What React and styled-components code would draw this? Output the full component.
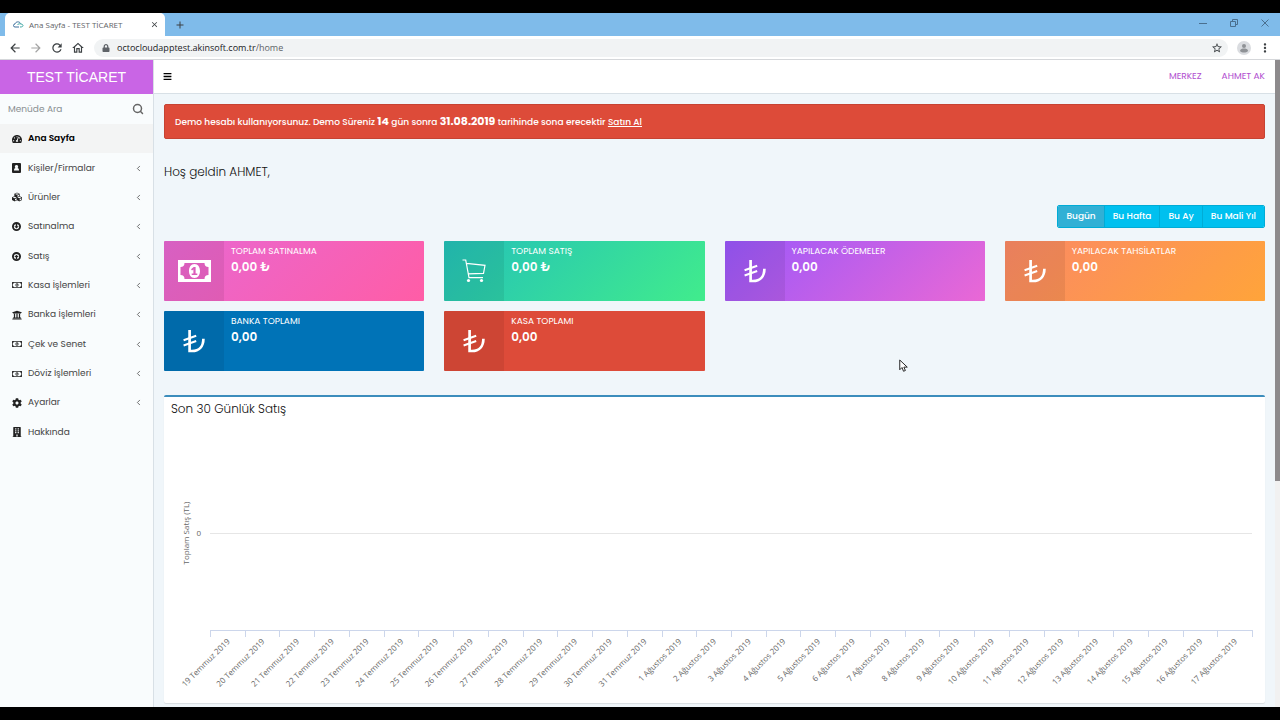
import React from "react";
import styled, { createGlobalStyle } from "styled-components";
import {
  FaTachometerAlt,
  FaCubes,
  FaRegMoneyBillAlt,
  FaUniversity,
  FaCog,
  FaBuilding,
  FaLock,
  FaBars,
} from "react-icons/fa";
import {
  MdArrowBack,
  MdArrowForward,
  MdRefresh,
  MdOutlineHome,
  MdStarBorder,
  MdMoreVert,
  MdAdd,
  MdClose,
} from "react-icons/md";
import { ChevronLeft, Search } from "lucide-react";

const ArrowRing = ({ up }) => (
  <svg viewBox="0 0 24 24" width="9" height="9">
    <circle cx="12" cy="12" r="9.5" fill="none" stroke="currentColor" strokeWidth="5" />
    <path
      d="M10 5h4v6h4l-6 6-6-6h4z"
      fill="currentColor"
      transform={up ? "rotate(180 12 12)" : undefined}
    />
  </svg>
);

const ContactBook = () => (
  <svg viewBox="0 0 18 20" width="9" height="10">
    <path
      d="M2 0h14a2 2 0 0 1 2 2v16a2 2 0 0 1-2 2H2a2 2 0 0 1-2-2V2a2 2 0 0 1 2-2zm7 4a3.300 3.300 0 0 0-2 6c-2 .6-3 2-3 5h10c0-3-1-4.400-3-5a3.300 3.300 0 0 0-2-6z"
      fill="currentColor"
      fillRule="evenodd"
    />
  </svg>
);

const Avatar = () => (
  <svg viewBox="0 0 28 28" width="14" height="14">
    <circle cx="14" cy="14" r="14" fill="#dadce0" />
    <circle cx="14" cy="10" r="4" fill="#8f9296" />
    <path d="M6 20c0-4 5-5 8-5s8 1 8 5c-4 4-12 4-16 0z" fill="#8f9296" />
  </svg>
);

const Lira = () => (
  <svg viewBox="0 0 22 23" width="22" height="23" fill="none" stroke="currentColor">
    <path d="M6.6 0V21H9c7 0 11.400-4.600 11.400-12.300" strokeWidth="2.700" />
    <path d="M.6 10.300 13.200 5.800M.6 15.500 13.200 11" strokeWidth="2" />
  </svg>
);

const Banknote = () => (
  <svg viewBox="0 0 33 22" width="33" height="22">
    <path
      d="M0 0h33v22H0zM6.500 3a4 4 0 0 1-4 4v8a4 4 0 0 1 4 4h20a4 4 0 0 1 4-4V7a4 4 0 0 1-4-4z"
      fill="currentColor"
      fillRule="evenodd"
    />
    <path
      d="M16.500 4c3.600 0 5.500 3.300 5.500 7s-1.900 7-5.500 7-5.500-3.300-5.500-7 1.900-7 5.500-7zm-.8 3-2.700 2.200 1 1.200 1.400-1v4.200h-1.700v1.500h5.600v-1.500h-1.700V7z"
      fill="currentColor"
      fillRule="evenodd"
    />
  </svg>
);

const Cart = () => (
  <svg viewBox="0 0 24 24" width="24" height="24" fill="none" stroke="currentColor" strokeWidth="1.200">
    <path d="M.5 1h3.200L7 18.600h14M4.400 4.300l18.600 2-1.500 8L6 14.800" />
    <circle cx="6.500" cy="21.500" r="1.600" fill="currentColor" stroke="none" />
    <circle cx="19.500" cy="21.500" r="1.600" fill="currentColor" stroke="none" />
  </svg>
);

const menu = [
  { label: "Ana Sayfa", icon: <FaTachometerAlt />, active: true },
  { label: "Kişiler/Firmalar", icon: <ContactBook />, more: true },
  { label: "Ürünler", icon: <FaCubes />, more: true },
  { label: "Satınalma", icon: <ArrowRing />, more: true },
  { label: "Satış", icon: <ArrowRing up />, more: true },
  { label: "Kasa İşlemleri", icon: <FaRegMoneyBillAlt />, more: true },
  { label: "Banka İşlemleri", icon: <FaUniversity />, more: true },
  { label: "Çek ve Senet", icon: <FaRegMoneyBillAlt />, more: true },
  { label: "Döviz İşlemleri", icon: <FaRegMoneyBillAlt />, more: true },
  { label: "Ayarlar", icon: <FaCog />, more: true },
  { label: "Hakkında", icon: <FaBuilding /> },
];

const stats = [
  { label: "TOPLAM SATINALMA", value: "0,00 ₺", icon: <Banknote />, from: "#e868d2", to: "#ff5da6" },
  { label: "TOPLAM SATIŞ", value: "0,00 ₺", icon: <Cart />, from: "#24c1b8", to: "#41ec8c" },
  { label: "YAPILACAK ÖDEMELER", value: "0,00", icon: <Lira />, from: "#9a58fb", to: "#ea68d5" },
  { label: "YAPILACAK TAHSİLATLAR", value: "0,00", icon: <Lira />, from: "#fb8965", to: "#ffa43a" },
  { label: "BANKA TOPLAMI", value: "0,00", icon: <Lira />, from: "#0073b7", to: "#0073b7" },
  { label: "KASA TOPLAMI", value: "0,00", icon: <Lira />, from: "#dd4b39", to: "#dd4b39" },
];

const ranges = ["Bugün", "Bu Hafta", "Bu Ay", "Bu Mali Yıl"];

const days = [
  ...Array.from({ length: 13 }, (_, i) => `${19 + i} Temmuz 2019`),
  ...Array.from({ length: 17 }, (_, i) => `${1 + i} Ağustos 2019`),
];

function SalesChart() {
  const left = 46;
  const right = 1088;
  const step = (right - left) / days.length;
  return (
    <ChartSvg viewBox="0 0 1101 282" role="img" aria-label="Son 30 Günlük Satış">
      <text transform="translate(25 112) rotate(-90)" textAnchor="middle">
        Toplam Satış (TL)
      </text>
      <text x="37" y="115" textAnchor="end">
        0
      </text>
      <path d={`M${left} 112.500H${right}`} stroke="#e6e6e6" />
      <path d={`M${left} 209.500H${right}`} stroke="#ccd6eb" />
      {[...days, "end"].map((day, i) => (
        <path key={day} d={`M${Math.round(left + i * step)}.500 209v7`} stroke="#ccd6eb" />
      ))}
      {days.map((day, i) => (
        <text
          key={day}
          textAnchor="end"
          transform={`translate(${left + (i + 0.5) * step + 3} 221) rotate(-45)`}
        >
          {day}
        </text>
      ))}
    </ChartSvg>
  );
}

export default function App() {
  return (
    <Screen>
      <GlobalStyle />
      <TabStrip>
        <Tab>
          <svg viewBox="0 0 22 14" width="11" height="7" fill="none" strokeWidth="2">
            <path d="M12 12H4a3 3 0 0 1 0-6c1-5 9-6 11-1" stroke="#3c6f9c" />
            <path d="M9 7c4-3 11-1 11 2 0 2-2 3-6 3" stroke="#3fa9a5" />
          </svg>
          <TabTitle>Ana Sayfa - TEST TİCARET</TabTitle>
          <ChromeButton aria-label="Sekmeyi kapat" $size={9}>
            <MdClose />
          </ChromeButton>
        </Tab>
        <ChromeButton aria-label="Yeni sekme" $size={12}>
          <MdAdd />
        </ChromeButton>
        <WindowButtons>
          <ChromeButton aria-label="Küçült" $size={8}>
            <svg viewBox="0 0 8 8" width="8" height="8" stroke="#4a6f8f">
              <path d="M0 4.500h8" />
            </svg>
          </ChromeButton>
          <ChromeButton aria-label="Geri yükle" $size={8}>
            <svg viewBox="0 0 8 8" width="8" height="8" fill="none" stroke="#4a6f8f">
              <path d="M.5 2.500h5v5h-5zM2.500 2.500v-2h5v5h-2" />
            </svg>
          </ChromeButton>
          <ChromeButton aria-label="Kapat" $size={8}>
            <svg viewBox="0 0 8 8" width="8" height="8" stroke="#4a6f8f">
              <path d="M.5.5l7 7M7.500.5l-7 7" />
            </svg>
          </ChromeButton>
        </WindowButtons>
      </TabStrip>
      <AddressBar>
        <ChromeButton aria-label="Geri" $size={14}>
          <MdArrowBack />
        </ChromeButton>
        <ChromeButton aria-label="İleri" $size={14} $dim>
          <MdArrowForward />
        </ChromeButton>
        <ChromeButton aria-label="Yenile" $size={14}>
          <MdRefresh />
        </ChromeButton>
        <ChromeButton aria-label="Giriş sayfası" $size={14}>
          <MdOutlineHome />
        </ChromeButton>
        <UrlField>
          <FaLock size={8} />
          <input aria-label="Adres" defaultValue="octocloudapptest.akinsoft.com.tr" />
          <span>/home</span>
          <ChromeButton aria-label="Yer işareti" $size={12}>
            <MdStarBorder />
          </ChromeButton>
        </UrlField>
        <ChromeButton aria-label="Profil" $size={14}>
          <Avatar />
        </ChromeButton>
        <ChromeButton aria-label="Menü" $size={14}>
          <MdMoreVert />
        </ChromeButton>
      </AddressBar>
      <Viewport>
        <Sidebar>
          <Brand href="#home">TEST TİCARET</Brand>
          <MenuSearch>
            <input aria-label="Menüde Ara" placeholder="Menüde Ara" />
            <button aria-label="Ara">
              <Search size={12} strokeWidth={3} />
            </button>
          </MenuSearch>
          <Menu>
            {menu.map((item) => (
              <MenuLink key={item.label} href="#" $active={item.active}>
                <MenuIcon>{item.icon}</MenuIcon>
                {item.label}
                {item.more && <ChevronLeft className="more" size={9} strokeWidth={2} />}
              </MenuLink>
            ))}
          </Menu>
        </Sidebar>
        <Main>
          <TopBar>
            <button aria-label="Menüyü aç">
              <FaBars />
            </button>
            <a href="#merkez">MERKEZ</a>
            <a href="#hesap">AHMET AK</a>
          </TopBar>
          <Content>
            <Alert>
              Demo hesabı kullanıyorsunuz. Demo Süreniz <b>14</b> gün sonra <b>31.08.2019</b> tarihinde
              sona erecektir <a href="#satin-al">Satın Al</a>
            </Alert>
            <Welcome>Hoş geldin AHMET,</Welcome>
            <RangeGroup>
              {ranges.map((range, i) => (
                <RangeButton key={range} $active={i === 0}>
                  {range}
                </RangeButton>
              ))}
            </RangeGroup>
            <StatGrid>
              {stats.map((stat) => (
                <StatCard key={stat.label} $from={stat.from} $to={stat.to}>
                  <StatIcon>{stat.icon}</StatIcon>
                  <StatText>
                    <span>{stat.label}</span>
                    <strong>{stat.value}</strong>
                  </StatText>
                </StatCard>
              ))}
            </StatGrid>
            <Panel>
              <h3>Son 30 Günlük Satış</h3>
              <SalesChart />
            </Panel>
          </Content>
        </Main>
        <ScrollTrack>
          <ScrollThumb />
        </ScrollTrack>
      </Viewport>
      <Pointer viewBox="0 0 12 18" width="9" height="14">
        <path
          d="M1 1v13l3-3 2 5 2.500-1-2-4.500H11z"
          fill="#fff"
          stroke="#222"
          strokeWidth="1.300"
        />
      </Pointer>
    </Screen>
  );
}

const GlobalStyle = createGlobalStyle`
  * {
    box-sizing: border-box;
  }
  body {
    margin: 0;
    background: #000000;
    font-family: Poppins, Inter, sans-serif;
    font-size: 9px;
    color: #333333;
  }
  button, input {
    font: inherit;
    color: inherit;
    border: 0;
    padding: 0;
    background: none;
    outline: none;
  }
  a {
    color: inherit;
    text-decoration: none;
  }
  svg {
    display: block;
    flex-shrink: 0;
  }
`;

const Screen = styled.div`
  position: relative;
  display: flex;
  flex-direction: column;
  min-height: 100vh;
  padding: 13px 0;
`;

const TabStrip = styled.div`
  display: flex;
  align-items: center;
  gap: 9px;
  height: 23px;
  padding-left: 5px;
  background: #7fbbea;
  font-family: "Open Sans", sans-serif;
`;

const Tab = styled.div`
  display: flex;
  align-items: center;
  align-self: stretch;
  gap: 5px;
  width: 160px;
  padding: 0 6px 0 8px;
  border-radius: 5px 5px 0 0;
  background: #ffffff;
`;

const TabTitle = styled.span`
  flex: 1;
  font-size: 8px;
  color: #5f6368;
  white-space: nowrap;
`;

const ChromeButton = styled.button`
  display: flex;
  font-size: ${(props) => props.$size}px;
  color: ${(props) => (props.$dim ? "#a3a3a3" : "#3c4043")};
`;

const WindowButtons = styled.div`
  display: flex;
  gap: 23px;
  margin-left: auto;
  padding: 0 11px 4px 0;
`;

const AddressBar = styled.div`
  display: flex;
  align-items: center;
  gap: 7px;
  height: 24px;
  padding: 0 8px;
  border-bottom: 1px solid #d5d7da;
  background: #ffffff;
`;

const UrlField = styled.label`
  flex: 1;
  display: flex;
  align-items: center;
  height: 18px;
  padding: 0 5px 0 8px;
  margin: 0 2px;
  border-radius: 9px;
  background: #f1f3f4;
  font-family: "Open Sans", sans-serif;
  font-size: 9px;
  color: #5f6368;
  input {
    field-sizing: content;
    margin-left: 7px;
    color: #202124;
  }
  span {
    flex: 1;
  }
`;

const Viewport = styled.div`
  flex: 1;
  display: flex;
  background: #f0f6fa;
`;

const Sidebar = styled.aside`
  width: 154px;
  border-right: 1px solid #d8e0e6;
  background: #f9fcfd;
`;

const Brand = styled.a`
  display: block;
  line-height: 34px;
  background: #c965e5;
  font-family: "Liberation Sans", Arial, sans-serif;
  font-size: 14px;
  color: #ffffff;
  text-align: center;
`;

const MenuSearch = styled.div`
  display: flex;
  align-items: center;
  height: 30px;
  padding: 0 9px 0 8px;
  input {
    flex: 1;
    min-width: 0;
  }
  input::placeholder {
    color: #8a8f92;
  }
  button {
    color: #666666;
  }
`;

const Menu = styled.nav`
  display: grid;
  grid-auto-rows: 1fr;
  min-height: 323px;
`;

const MenuLink = styled.a`
  display: flex;
  align-items: center;
  padding: 0 10px 0 12px;
  background: ${(props) => (props.$active ? "#f3f4f4" : "none")};
  font-weight: ${(props) => (props.$active ? 600 : 400)};
  color: ${(props) => (props.$active ? "#000000" : "#444444")};
  .more {
    margin-left: auto;
  }
`;

const MenuIcon = styled.span`
  width: 16px;
  font-size: 10px;
  color: #222222;
`;

const Main = styled.main`
  flex: 1;
  min-width: 0;
`;

const TopBar = styled.header`
  display: flex;
  align-items: center;
  gap: 20px;
  height: 34px;
  padding: 0 10px 0 9px;
  border-bottom: 1px solid #d8e0e6;
  background: #ffffff;
  color: #b14fcf;
  button {
    margin-right: auto;
    color: #000000;
  }
`;

const Content = styled.div`
  display: flex;
  flex-direction: column;
  padding: 10px 10px 4px;
`;

const Alert = styled.div`
  padding: 0 10px;
  border: 1px solid #c64333;
  border-radius: 2px;
  background: #dd4b39;
  font-weight: 500;
  line-height: 32px;
  color: #ffffff;
  b {
    font-size: 11px;
    font-weight: 700;
  }
  a {
    text-decoration: underline;
  }
`;

const Welcome = styled.p`
  margin: 24px 0;
  font-size: 12px;
  font-weight: 300;
  line-height: 18px;
  color: #111111;
`;

const RangeGroup = styled.div`
  display: flex;
  align-self: flex-end;
  margin-bottom: 13px;
  border: 1px solid #00acd6;
  border-radius: 2px;
  overflow: hidden;
`;

const RangeButton = styled.button`
  padding: 0 8px;
  background: ${(props) => (props.$active ? "#31b0d5" : "#00c0ef")};
  font-weight: 500;
  line-height: 21px;
  color: #ffffff;
  & + & {
    border-left: 1px solid #00acd6;
  }
`;

const StatGrid = styled.div`
  display: grid;
  grid-template-columns: repeat(4, 1fr);
  gap: 10px 20px;
`;

const StatCard = styled.section`
  display: flex;
  height: 60px;
  border-radius: 1px;
  overflow: hidden;
  background: linear-gradient(135deg, ${(props) => props.$from}, ${(props) => props.$to});
  color: #ffffff;
`;

const StatIcon = styled.div`
  display: flex;
  align-items: center;
  justify-content: center;
  width: 60px;
  background: rgba(0, 0, 0, 0.07);
`;

const StatText = styled.div`
  display: flex;
  flex-direction: column;
  padding: 3px 7px;
  line-height: 15px;
  strong {
    font-size: 12px;
    font-weight: 600;
  }
`;

const Panel = styled.section`
  margin-top: 24px;
  border-top: 2px solid #3c8dbc;
  border-radius: 2px;
  background: #ffffff;
  box-shadow: 0 1px 1px rgba(0, 0, 0, 0.1);
  h3 {
    margin: 0;
    padding: 0 7px;
    font-size: 12px;
    font-weight: 300;
    line-height: 24px;
    color: #111111;
  }
`;

const ChartSvg = styled.svg`
  width: 100%;
  font-family: "Open Sans", sans-serif;
  font-size: 8px;
  fill: #666666;
`;

const ScrollTrack = styled.div`
  width: 5px;
  background: #f1f1f1;
`;

const ScrollThumb = styled.div`
  height: 65%;
  background: #8d8a8c;
`;

const Pointer = styled.svg`
  position: absolute;
  left: 899px;
  top: 359px;
`;
